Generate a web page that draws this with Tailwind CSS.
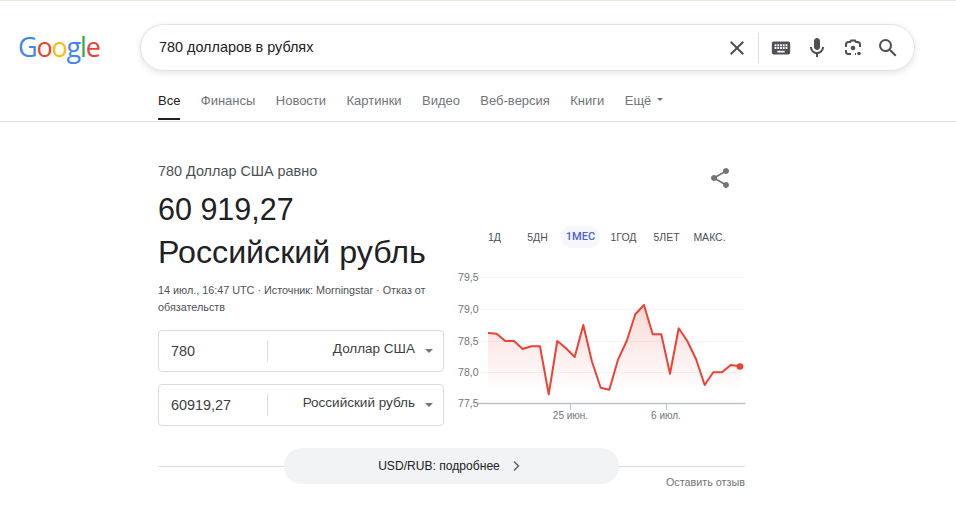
<!DOCTYPE html>
<html lang="en">
<head>
  <meta charset="UTF-8" />
  <title>780 долларов в рублях</title>
  <script src="https://cdn.jsdelivr.net/npm/@tailwindcss/browser@4"></script>
</head>
<body class="bg-white font-['Liberation_Sans',Arial,sans-serif] text-[#202124] overflow-hidden">
  <div class="w-[956px] h-[523px] overflow-hidden">
    <div class="h-[1px] bg-[#e6e6da]"></div>

    <!-- header -->
    <header class="flex items-center h-[47px] mt-[23px] pl-[18px]">
      <div class="w-[122px] font-['Open_Sans',sans-serif] font-medium text-[27px] leading-[47px] tracking-[-1.200px] -mt-[3px]">
        <span class="text-[#4285f4]">G</span><span class="text-[#ea4335]">o</span><span class="text-[#fbbc05]">o</span><span class="text-[#4285f4]">g</span><span class="text-[#34a853]">l</span><span class="text-[#ea4335]">e</span>
      </div>
      <div class="w-[775px] h-[47px] rounded-full border border-[#dfe1e5] shadow-[0_2px_5px_1px_rgba(64,60,67,0.10)] flex items-center pl-[18px] pr-[14px]">
        <span class="flex-1 text-[14.400px]">780 долларов в рублях</span>
        <svg class="w-[24px] h-[24px] text-[#4d5156]" viewBox="0 0 24 24" fill="currentColor"><path d="M19 6.410 17.590 5 12 10.590 6.410 5 5 6.410 10.590 12 5 17.590 6.410 19 12 13.410 17.590 19 19 17.590 13.410 12z"/></svg>
        <div class="w-px h-[30px] bg-[#dadce0] ml-[9px] mr-[11px]"></div>
        <svg class="w-[22px] h-[22px] text-[#4d5156]" viewBox="0 0 24 24" fill="currentColor"><path d="M20 5H4c-1.100 0-2 .9-2 2v10c0 1.100.9 2 2 2h16c1.100 0 2-.9 2-2V7c0-1.100-.9-2-2-2zm-9 3h2v2h-2V8zm0 3h2v2h-2v-2zM8 8h2v2H8V8zm0 3h2v2H8v-2zm-1 2H5v-2h2v2zm0-3H5V8h2v2zm9 7H8v-2h8v2zm0-4h-2v-2h2v2zm0-3h-2V8h2v2zm3 3h-2v-2h2v2zm0-3h-2V8h2v2z"/></svg>
        <svg class="w-[24px] h-[24px] ml-[13px] text-[#4d5156]" viewBox="0 0 24 24" fill="currentColor"><path d="M12 14c1.660 0 3-1.340 3-3V5c0-1.660-1.340-3-3-3S9 3.340 9 5v6c0 1.660 1.340 3 3 3z"/><path d="M17 11c0 2.760-2.240 5-5 5s-5-2.240-5-5H5c0 3.530 2.610 6.430 6 6.920V21h2v-3.080c3.390-.49 6-3.390 6-6.920h-2z"/></svg>
        <svg class="w-[24px] h-[24px] ml-[12px] text-[#4d5156]" viewBox="0 0 24 24" fill="none" stroke="currentColor" stroke-width="2"><path d="M9 6H7.500A2.500 2.500 0 0 0 5 8.500V11M19 11V8.500A2.500 2.500 0 0 0 16.500 6H15M9 6.500 10 4.500h4l1 2M5 14v1.500A2.500 2.500 0 0 0 7.500 18H10M14 18h1"/><circle cx="12" cy="12" r="2.300" fill="currentColor" stroke="none"/><circle cx="18" cy="17.500" r="1.800" fill="currentColor" stroke="none"/></svg>
        <svg class="w-[24px] h-[24px] ml-[11px] text-[#4d5156]" viewBox="0 0 24 24" fill="currentColor"><path d="M15.500 14h-.79l-.28-.27A6.470 6.470 0 0 0 16 9.500 6.500 6.500 0 1 0 9.500 16c1.610 0 3.090-.59 4.230-1.570l.27.28v.79l5 4.990L20.490 19l-4.990-5zm-6 0C7.010 14 5 11.990 5 9.500S7.010 5 9.500 5 14 7.010 14 9.500 11.990 14 9.500 14z"/></svg>
      </div>
    </header>

    <!-- tabs -->
    <nav class="flex h-[51px] pl-[158px] gap-[20.400px] border-b border-[#dadce0] text-[13px] text-[#70757a] pt-[20px]">
      <div class="relative text-[#202124] h-[29px]">Все<div class="absolute left-0 right-0 bottom-0 h-[2px] bg-[#202124]"></div></div>
      <div>Финансы</div>
      <div>Новости</div>
      <div>Картинки</div>
      <div>Видео</div>
      <div>Веб-версия</div>
      <div>Книги</div>
      <div class="flex items-start gap-[6px]">Ещё <span class="mt-[7px] w-0 h-0 border-x-[3.500px] border-x-transparent border-t-[3.500px] border-t-[#70757a]"></span></div>
    </nav>

    <main class="w-[587px] ml-[158px] relative">
      <div class="flex h-[306px]">
        <!-- left column -->
        <div class="w-[286px] shrink-0">
          <div class="text-[14.400px] leading-[20px] text-[#4d5156] mt-[39px]">780 Доллар США равно</div>
          <div class="text-[30.500px] leading-[44px] mt-[6px]">60 919,27</div>
          <div class="text-[32.200px] leading-[44px] -mt-px whitespace-nowrap">Российский рубль</div>
          <div class="text-[10.800px] leading-[17px] text-[#4d5156] mt-[8px]">14 июл., 16:47 UTC · Источник: Morningstar · Отказ от обязательств</div>

          <div class="mt-[14px] h-[42px] border border-[#dadce0] rounded-[4px] flex items-center text-[#3c4043]">
            <span class="w-[108px] pl-[12px] pt-[2px] text-[14.400px]">780</span>
            <div class="w-px h-[22px] bg-[#dadce0]"></div>
            <span class="flex-1 text-right -mt-[3px] text-[13.500px]">Доллар США</span>
            <span class="ml-[10px] mr-[10px] w-0 h-0 border-x-[4px] border-x-transparent border-t-[4px] border-t-[#70757a]"></span>
          </div>
          <div class="mt-[12px] h-[42px] border border-[#dadce0] rounded-[4px] flex items-center text-[#3c4043]">
            <span class="w-[108px] pl-[12px] pt-[2px] text-[14.400px]">60919,27</span>
            <div class="w-px h-[22px] bg-[#dadce0]"></div>
            <span class="flex-1 text-right -mt-[3px] text-[13.500px]">Российский рубль</span>
            <span class="ml-[10px] mr-[10px] w-0 h-0 border-x-[4px] border-x-transparent border-t-[4px] border-t-[#70757a]"></span>
          </div>
        </div>

        <!-- right column -->
        <div class="flex-1 relative">
          <svg class="absolute right-[13px] top-[44px] w-[24px] h-[24px] text-[#70757a]" viewBox="0 0 24 24" fill="currentColor"><path d="M18 16.080c-.76 0-1.440.3-1.960.77L8.910 12.700c.05-.23.09-.46.09-.7s-.04-.47-.09-.7l7.050-4.110c.54.5 1.250.81 2.040.81 1.660 0 3-1.340 3-3s-1.340-3-3-3-3 1.340-3 3c0 .24.04.47.09.7L8.040 9.810C7.500 9.310 6.790 9 6 9c-1.660 0-3 1.340-3 3s1.340 3 3 3c.79 0 1.500-.31 2.040-.81l7.120 4.160c-.05.21-.08.43-.08.65 0 1.610 1.310 2.920 2.920 2.920 1.610 0 2.920-1.310 2.920-2.920s-1.310-2.920-2.920-2.920z"/></svg>

          <div class="absolute left-[29px] top-[104px] w-[258px] grid grid-cols-6 items-center text-[10.500px] text-[#4d5156] h-[22px] text-center leading-[20px]">
            <span>1Д</span>
            <span>5ДН</span>
            <span class="mx-[2px] h-[22px] rounded-full bg-[#f6f7fb] text-[#4b5fd0] font-['Roboto',sans-serif] font-medium text-[11px] leading-[21px]">1МЕС</span>
            <span>1ГОД</span>
            <span>5ЛЕТ</span>
            <span>МАКС.</span>
          </div>

          <svg class="absolute left-[14px] top-[143px] w-[292px] h-[165px]" viewBox="0 0 292 165" font-family="Liberation Sans, Arial, sans-serif">
            <defs>
              <linearGradient id="fill" x1="0" y1="0" x2="0" y2="1">
                <stop offset="0" stop-color="#ea4335" stop-opacity="0.2" />
                <stop offset="1" stop-color="#ea4335" stop-opacity="0.01" />
              </linearGradient>
            </defs>
            <g stroke="#f4f4f4" stroke-width="1">
              <line x1="22" x2="287" y1="12.500" y2="12.500" />
              <line x1="22" x2="287" y1="44.500" y2="44.500" />
              <line x1="22" x2="287" y1="76.500" y2="76.500" />
              <line x1="22" x2="287" y1="107.500" y2="107.500" />
            </g>
            <g font-size="10.500" fill="#70757a" text-anchor="end">
              <text x="20.500" y="16">79,5</text>
              <text x="20.500" y="48">79,0</text>
              <text x="20.500" y="80">78,5</text>
              <text x="20.500" y="111">78,0</text>
              <text x="20.500" y="142">77,5</text>
            </g>
            <path fill="url(#fill)" d="M30 68 38.700 68.700 47.300 76 56 76 64.700 84 73.300 81.300 82 81.300 90.700 124 99.300 76 108 83.300 116.700 92 125.300 60 134 96.700 142.700 122.700 151.300 124 160 94.700 168.700 76 177.300 49.300 186 40 194.700 69.300 203.300 69.300 212 108.700 220.700 63.300 229.300 76 238 94 246.700 120 255.300 107.300 264 107.300 272.700 100 282 101.300 282 124 30 124Z" />
            <polyline fill="none" stroke="#ea4335" stroke-width="2" stroke-linejoin="round" points="30,68 38.700,68.700 47.300,76 56,76 64.700,84 73.300,81.300 82,81.300 90.700,129.300 99.300,76 108,83.300 116.700,92 125.300,60 134,96.700 142.700,122.700 151.300,124.700 160,94.700 168.700,76 177.300,49.300 186,40 194.700,69.300 203.300,69.300 212,108.700 220.700,63.300 229.300,76 238,94 246.700,120 255.300,107.300 264,107.300 272.700,100 282,101.300" />
            <circle cx="282" cy="101.500" r="3.300" fill="#ea4335" />
            <line x1="20" x2="287.500" y1="138.500" y2="138.500" stroke="#bdc1c6" stroke-width="1.500" />
            <line x1="112.500" x2="112.500" y1="138" y2="145" stroke="#bdc1c6" />
            <line x1="208.500" x2="208.500" y1="138" y2="145" stroke="#bdc1c6" />
            <g font-size="10" fill="#70757a" text-anchor="middle">
              <text x="112.500" y="154">25 июн.</text>
              <text x="208" y="154">6 июл.</text>
            </g>
          </svg>
        </div>
      </div>

      <!-- footer -->
      <div class="relative h-[70px]">
        <div class="absolute left-0 right-0 top-[38px] h-px bg-[#dadce0]"></div>
        <div class="absolute left-[126px] top-[20px] w-[335px] h-[36px] rounded-full bg-[#f1f3f4] flex items-center justify-center gap-[10px] text-[12.100px] text-[#202124]">
          <span class="-ml-[3px]">USD/RUB: подробнее</span>
          <svg class="w-[12px] h-[12px] text-[#5f6368]" viewBox="0 0 12 12" fill="none" stroke="currentColor" stroke-width="1.500"><path d="M4 1.500 8.500 6 4 10.500"/></svg>
        </div>
        <div class="absolute right-0 top-[46px] text-[10.800px] text-[#70757a]">Оставить отзыв</div>
      </div>
    </main>
  </div>
</body>
</html>
